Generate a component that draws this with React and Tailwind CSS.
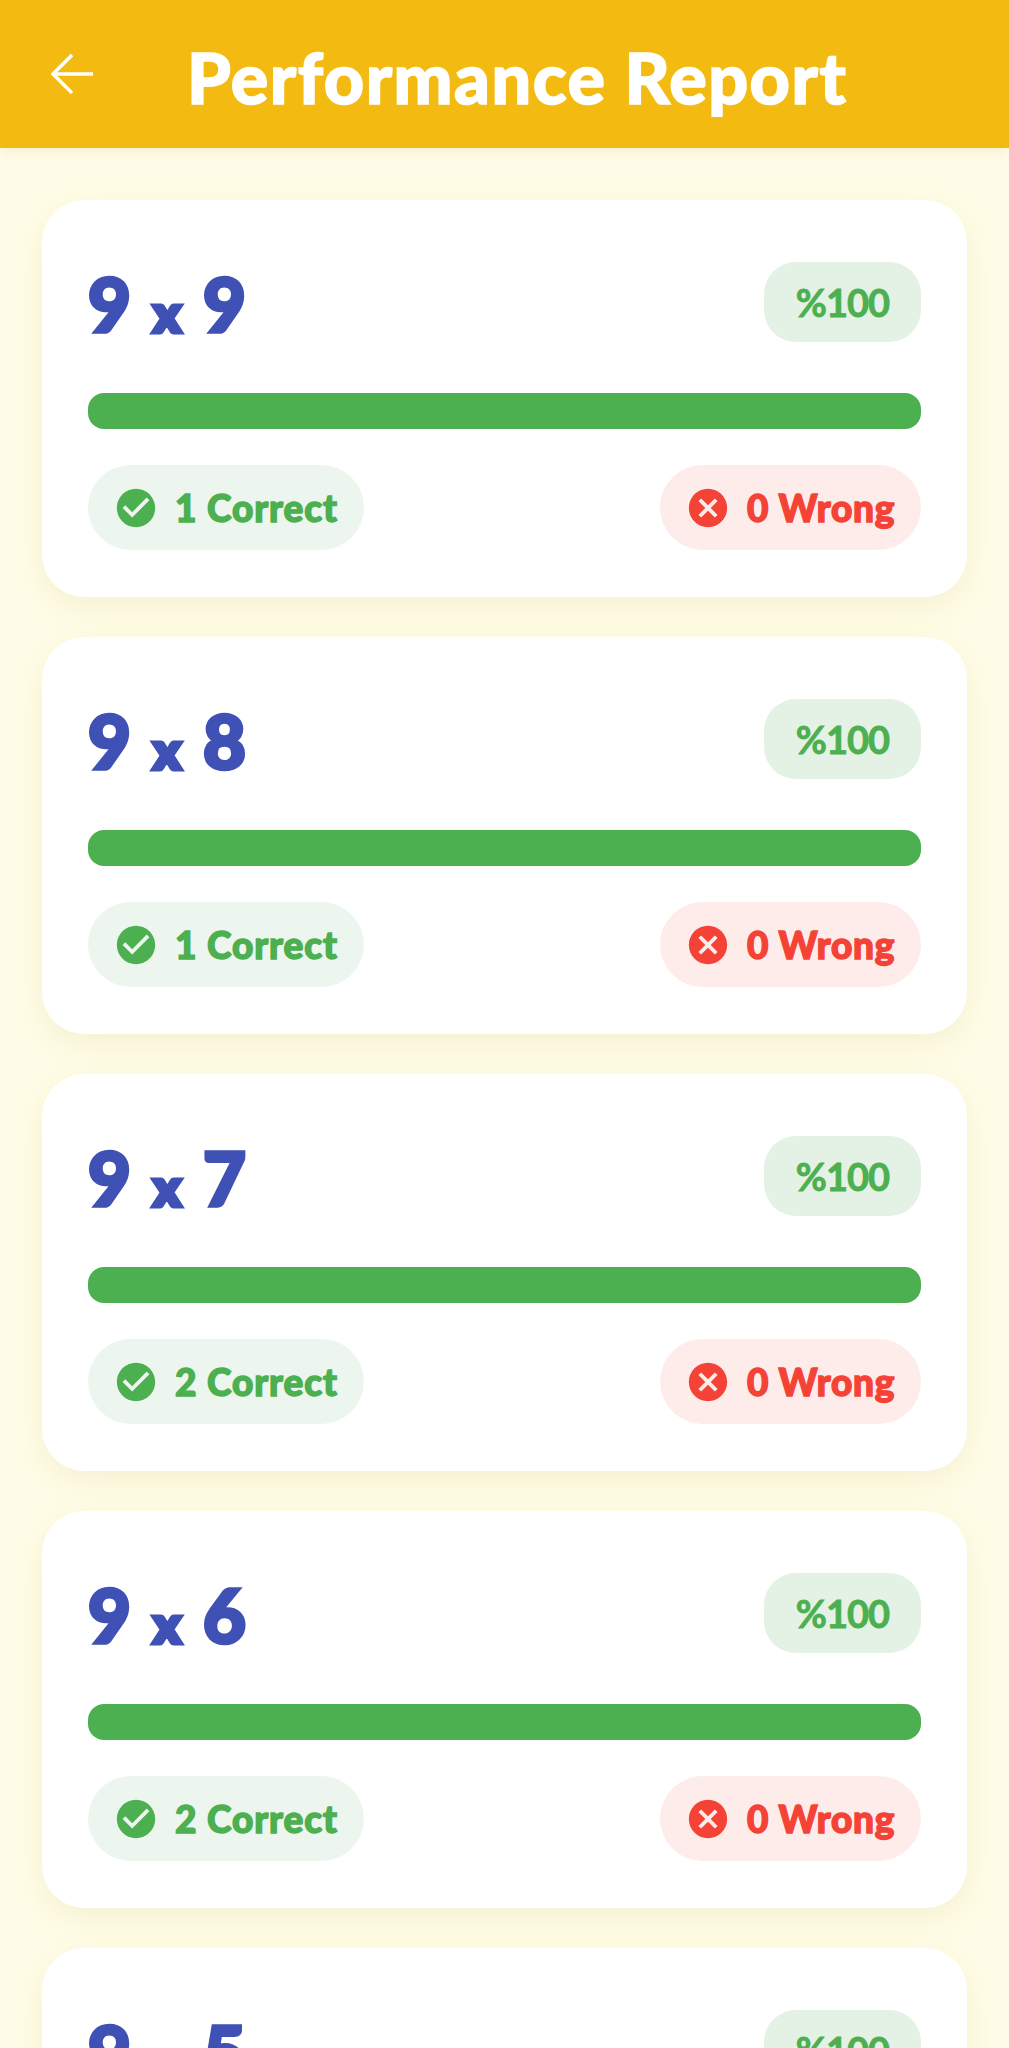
import React from "react";
import { MdCheckCircle, MdCancel } from "react-icons/md";

const rows = [
  { a: "9", b: "9", correct: 1 },
  { a: "9", b: "8", correct: 1 },
  { a: "9", b: "7", correct: 2 },
  { a: "9", b: "6", correct: 2 },
  { a: "9", b: "5", correct: 2 },
];

function ReportCard({ a, b, correct }) {
  return (
    <div className="shrink-0 h-[397px] rounded-[42px] bg-white px-[46px] pt-[62px] shadow-[0_10px_32px_rgba(170,150,60,0.12)]">
      <div className="flex h-[80px] items-center justify-between">
        <span className="flex w-[158px] items-baseline justify-between pt-[3px] text-[74px] leading-none font-black text-[#3f51b5] [-webkit-text-stroke:3.5px_#3f51b5]">
          <span>{a}</span>
          <span className="text-[50px] [-webkit-text-stroke:5px_#3f51b5]">x</span>
          <span>{b}</span>
        </span>
        <span className="flex h-[80px] w-[157px] items-center justify-center rounded-[32px] bg-[#e4f2e5] text-[38px] font-bold text-[#4caf50] [-webkit-text-stroke:0.8px_#4caf50] tracking-[-1px]">%100</span>
      </div>
      <div className="mt-[51px] h-[36px] rounded-[16px] bg-[#4caf50]" />
      <div className="mt-[36px] flex items-center justify-between">
        <div className="flex h-[85px] items-center rounded-full bg-[#edf6ee] pl-[25px] pr-[26px]">
          <MdCheckCircle size={46} className="text-[#4caf50]" />
          <span className="ml-[16px] text-[37px] font-black tracking-[0.9px] text-[#4caf50] [-webkit-text-stroke:1.4px_#4caf50]">{correct} Correct</span>
        </div>
        <div className="flex h-[85px] items-center rounded-full bg-[#fdecea] pl-[25px] pr-[26px]">
          <MdCancel size={46} className="text-[#f44336]" />
          <span className="ml-[16px] text-[37px] font-black tracking-[0.7px] text-[#f44336] [-webkit-text-stroke:1.4px_#f44336]">0 Wrong</span>
        </div>
      </div>
    </div>
  );
}

export default function App() {
  return (
    <div className="flex h-screen flex-col overflow-hidden bg-[#fffde7] font-['Lato','Open_Sans',sans-serif]">
      <header className="relative z-10 flex h-[148px] shrink-0 items-center bg-[#f3bb12] pl-[51px] shadow-[0_4px_12px_rgba(170,150,60,0.12)]">
        <svg width="42" height="42" viewBox="0 0 42 42" fill="none" stroke="#fff" strokeWidth="3.4" aria-hidden>
          <path d="M21 2 2 21l19 19M2 21h40" />
        </svg>
        <h1 className="ml-[94px] pt-[5px] text-[70px] leading-none font-black tracking-[1.5px] text-white [-webkit-text-stroke:1.5px_#fff]">Performance Report</h1>
      </header>
      <main className="flex flex-col gap-[40px] px-[42px] pt-[52px]">
        {rows.map((r) => (
          <ReportCard key={r.b} a={r.a} b={r.b} correct={r.correct} />
        ))}
      </main>
    </div>
  );
}
